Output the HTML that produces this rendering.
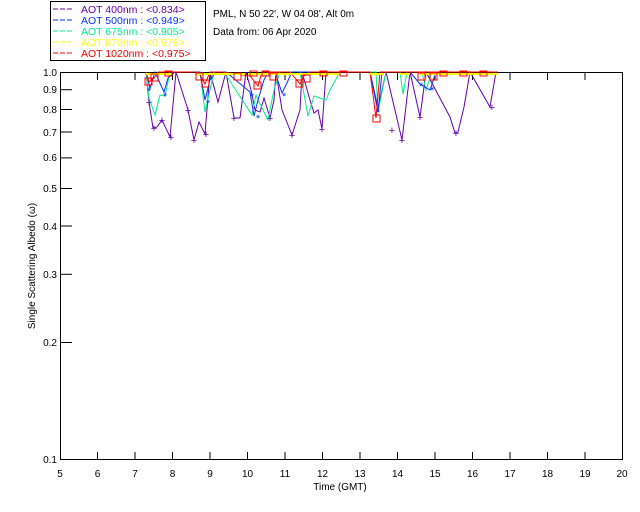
<!DOCTYPE html>
<html><head><meta charset="utf-8"><style>
body{margin:0;background:#fff;width:640px;height:512px;overflow:hidden;font-family:"Liberation Sans",sans-serif}
svg{position:absolute;left:0;top:0}
</style></head><body>
<svg width="640" height="512" viewBox="0 0 640 512" font-family="Liberation Sans, sans-serif" font-size="10">
<rect x="50.5" y="1.5" width="155" height="59" fill="#fff" stroke="#000"/>
<g font-size="10.5">
<line x1="53" y1="9" x2="74" y2="9" stroke="#6600aa" stroke-dasharray="5,2"/><text x="81" y="13" fill="#6600aa">AOT  400nm : &lt;0.834&gt;</text>
<line x1="53" y1="20" x2="74" y2="20" stroke="#0033ff" stroke-dasharray="5,2"/><text x="81" y="24" fill="#0033ff">AOT  500nm : &lt;0.949&gt;</text>
<line x1="53" y1="31" x2="74" y2="31" stroke="#00ee88" stroke-dasharray="5,2"/><text x="81" y="35" fill="#00ee88">AOT  675nm : &lt;0.905&gt;</text>
<line x1="53" y1="42" x2="74" y2="42" stroke="#ffff00" stroke-dasharray="5,2"/><text x="81" y="46" fill="#ffff00">AOT  870nm : &lt;0.976&gt;</text>
<line x1="53" y1="53" x2="74" y2="53" stroke="#ff0000" stroke-dasharray="5,2"/><text x="81" y="57" fill="#ff0000">AOT 1020nm : &lt;0.975&gt;</text>
</g>
<text x="213" y="17">PML, N 50 22', W 04 08', Alt 0m</text>
<text x="213" y="35">Data from: 06 Apr 2020</text>
<rect x="60.5" y="72.5" width="562" height="387" fill="none" stroke="#000"/>
<g stroke="#000">
<line x1="97.5" y1="73" x2="97.5" y2="80"/><line x1="135" y1="73" x2="135" y2="80"/><line x1="172.5" y1="73" x2="172.5" y2="80"/><line x1="210" y1="73" x2="210" y2="80"/><line x1="247.5" y1="73" x2="247.5" y2="80"/><line x1="285" y1="73" x2="285" y2="80"/><line x1="322.5" y1="73" x2="322.5" y2="80"/><line x1="360" y1="73" x2="360" y2="80"/><line x1="397.5" y1="73" x2="397.5" y2="80"/><line x1="435" y1="73" x2="435" y2="80"/><line x1="472.5" y1="73" x2="472.5" y2="80"/><line x1="510" y1="73" x2="510" y2="80"/><line x1="547.5" y1="73" x2="547.5" y2="80"/><line x1="585" y1="73" x2="585" y2="80"/>
<line x1="97.5" y1="459" x2="97.5" y2="452"/><line x1="135" y1="459" x2="135" y2="452"/><line x1="172.5" y1="459" x2="172.5" y2="452"/><line x1="210" y1="459" x2="210" y2="452"/><line x1="247.5" y1="459" x2="247.5" y2="452"/><line x1="285" y1="459" x2="285" y2="452"/><line x1="322.5" y1="459" x2="322.5" y2="452"/><line x1="360" y1="459" x2="360" y2="452"/><line x1="397.5" y1="459" x2="397.5" y2="452"/><line x1="435" y1="459" x2="435" y2="452"/><line x1="472.5" y1="459" x2="472.5" y2="452"/><line x1="510" y1="459" x2="510" y2="452"/><line x1="547.5" y1="459" x2="547.5" y2="452"/><line x1="585" y1="459" x2="585" y2="452"/>
<line x1="61" y1="89.7" x2="72" y2="89.7"/><line x1="61" y1="109.5" x2="72" y2="109.5"/><line x1="61" y1="132" x2="72" y2="132"/><line x1="61" y1="157.9" x2="72" y2="157.9"/><line x1="61" y1="188.5" x2="72" y2="188.5"/><line x1="61" y1="226" x2="72" y2="226"/><line x1="61" y1="274.3" x2="72" y2="274.3"/><line x1="61" y1="342.5" x2="72" y2="342.5"/>
</g>
<g text-anchor="end" font-size="10">
<text x="57" y="76">1.0</text><text x="57" y="93">0.9</text><text x="57" y="113">0.8</text><text x="57" y="136">0.7</text><text x="57" y="161">0.6</text><text x="57" y="192">0.5</text><text x="57" y="230">0.4</text><text x="57" y="278">0.3</text><text x="57" y="346">0.2</text><text x="57" y="463">0.1</text>
</g>
<g text-anchor="middle" font-size="10">
<text x="60" y="477">5</text><text x="97.5" y="477">6</text><text x="135" y="477">7</text><text x="172.5" y="477">8</text><text x="210" y="477">9</text><text x="247.5" y="477">10</text><text x="285" y="477">11</text><text x="322.5" y="477">12</text><text x="360" y="477">13</text><text x="397.5" y="477">14</text><text x="435" y="477">15</text><text x="472.5" y="477">16</text><text x="510" y="477">17</text><text x="547.5" y="477">18</text><text x="585" y="477">19</text><text x="622" y="477">20</text>
<text x="340" y="490">Time (GMT)</text>
</g>
<text transform="translate(35,266) rotate(-90)" text-anchor="middle" font-size="10">Single Scattering Albedo (ω)</text>
<polyline fill="none" stroke="#6600aa" points="146,72 149,102 153,128 157,127 162,120 170,137 176,72 188,110 194,140 199,122 205,134 210,72 218,102 226,72 234,118 240,118 246,72 251,90 255,110 260,112 264,98 270,118 274,100 276,72 282,110 286,120 292,135 300,110 302,72 310,100 314,113 318,110 322,129 326,72 370,72 378,108 386,72 402,140 410,72 420,117 426,72 450,117 455,133 458,132 464,107 470,72 490,107 496,72"/>
<polyline fill="none" stroke="#00ee88" points="146,72 149,98 155,115 160,95 165,96 170,72 200,72 205,112 210,90 214,72 224,72 252,115 256,95 262,108 268,120 274,90 280,72 300,72 308,116 314,96 320,98 326,100 330,90 340,72 376,72 378,112 386,72 400,72 403,94 407,72 422,72 426,90 432,72 498,72"/>
<polyline fill="none" stroke="#0033ff" points="146,72 150,88 155,72 164,92 168,78 175,72 200,72 205,100 210,80 216,72 226,72 250,92 254,116 258,100 264,80 268,72 275,72 282,93 286,85 292,72 370,72 378,112 382,72 410,72 420,84 430,90 436,72 498,72"/>
<polyline fill="none" stroke="#ff0000" points="146,72 149,82 154,78 158,72 196,72 200,75 205,84 210,72 222,72 250,76 258,86 262,72 290,72 300,84 304,76 310,72 370,72 376,118 380,72 498,72"/>
<g fill="none" stroke="#ffff00" stroke-width="2"><line x1="146" y1="74" x2="172" y2="74"/><line x1="195" y1="74" x2="245" y2="74"/><line x1="248" y1="74" x2="340" y2="74"/><line x1="370" y1="74" x2="384" y2="74"/><line x1="400" y1="74" x2="410" y2="74"/><line x1="420" y1="74" x2="498" y2="74"/></g>
<g fill="none" stroke="#ff0000"><rect x="145" y="78" width="7" height="7"/><rect x="151" y="74" width="7" height="7"/><rect x="196" y="73" width="7" height="7"/><rect x="202" y="80" width="7" height="7"/><rect x="254" y="82" width="7" height="7"/><rect x="296" y="80" width="7" height="7"/><rect x="303" y="75" width="7" height="7"/><rect x="373" y="115" width="7" height="7"/><rect x="418" y="73" width="7" height="7"/><rect x="430" y="73" width="7" height="7"/><rect x="234" y="73" width="7" height="7"/><rect x="270" y="73" width="7" height="7"/><rect x="165" y="71" width="7" height="5"/><rect x="250" y="71" width="7" height="5"/><rect x="262" y="71" width="7" height="5"/><rect x="320" y="71" width="7" height="5"/><rect x="340" y="71" width="7" height="5"/><rect x="440" y="71" width="7" height="5"/><rect x="460" y="71" width="7" height="5"/><rect x="480" y="71" width="7" height="5"/></g>
<g fill="#0033ff" font-size="11" text-anchor="middle"><text x="149" y="95">*</text><text x="165" y="100">*</text><text x="208" y="107">*</text><text x="252" y="100">*</text><text x="258" y="122">*</text><text x="284" y="100">*</text><text x="378" y="116">*</text><text x="421" y="90">*</text><text x="432" y="94">*</text></g>
<g fill="#6600aa" font-size="11" text-anchor="middle"><text x="149" y="106">+</text><text x="154" y="132">+</text><text x="162" y="124">+</text><text x="171" y="141">+</text><text x="188" y="114">+</text><text x="194" y="144">+</text><text x="206" y="138">+</text><text x="234" y="122">+</text><text x="270" y="122">+</text><text x="292" y="139">+</text><text x="322" y="133">+</text><text x="392" y="134">+</text><text x="402" y="144">+</text><text x="420" y="121">+</text><text x="456" y="137">+</text><text x="492" y="111">+</text></g>
</svg>
</body></html>
